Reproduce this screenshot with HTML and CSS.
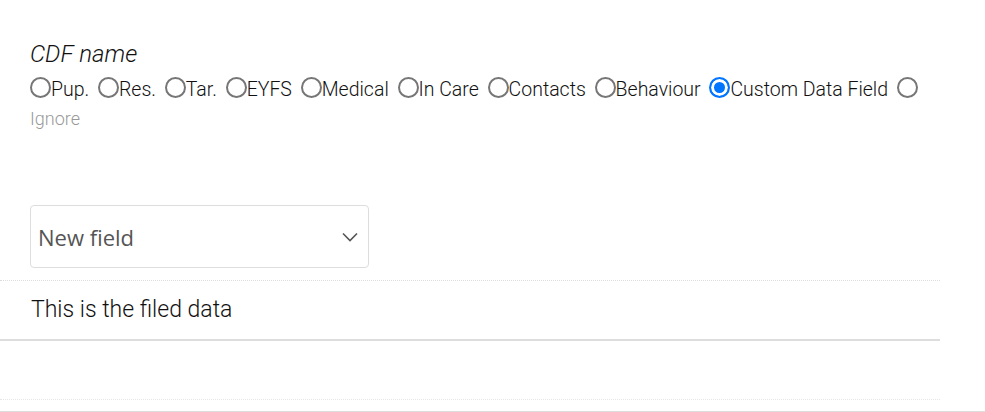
FILE: index.html
```html
<!DOCTYPE html>
<html>
<head>
    <meta name="viewport" content="width=device-width, initial-scale=1.0">
    <link rel="stylesheet" href="styles.css">
</head>
<body>

<div class="page">
    <div class="field-type">
        <div class="field-name">CDF name</div>
        <div class="type-options">
            <label class="type-option"><input type="radio" name="type">Pup.</label>
            <label class="type-option"><input type="radio" name="type">Res.</label>
            <label class="type-option"><input type="radio" name="type">Tar.</label>
            <label class="type-option"><input type="radio" name="type">EYFS</label>
            <label class="type-option"><input type="radio" name="type">Medical</label>
            <label class="type-option"><input type="radio" name="type">In Care</label>
            <label class="type-option"><input type="radio" name="type">Contacts</label>
            <label class="type-option"><input type="radio" name="type">Behaviour</label>
            <label class="type-option"><input type="radio" name="type" checked>Custom Data Field</label>
            <label class="type-option"><input type="radio" name="type"><span class="muted">Ignore</span></label>
        </div>
    </div>

    <div class="select-row">
        <div class="select-wrap">
            <select class="field-select">
                <option>New field</option>
            </select>
            <svg class="chevron" width="16" height="10" viewBox="0 0 16 10">
                <path d="M1 1.5 L8 8.5 L15 1.5" fill="none" stroke="#555" stroke-width="1.6"/>
            </svg>
        </div>
    </div>

    <div class="data-row">This is the filed data</div>
    <div class="empty-row"></div>
</div>
<div class="page-end"></div>

</body>
</html>
```

FILE: styles.css
```css
body {
    font-family: Roboto, "Liberation Sans", sans-serif;
    font-weight: 300;
    margin: 0;
    padding: 0;
    background-color: #fff;
    color: #111;
}

.page {
    width: 940px;
}

.field-type {
    padding: 40px 0 0 30px;
    height: 163px;
    box-sizing: border-box;
}

.field-name {
    font-size: 24px;
    font-style: italic;
    line-height: 28px;
}

.type-options {
    margin-top: 7px;
    font-size: 19.5px;
    line-height: 30px;
}

.type-option {
    white-space: nowrap;
    margin-right: 4px;
}

.type-option input[type="radio"] {
    appearance: none;
    -webkit-appearance: none;
    box-sizing: border-box;
    width: 21px;
    height: 21px;
    margin: 0;
    border: 2px solid #767676;
    border-radius: 50%;
    background-color: #fff;
    vertical-align: -2px;
}

.type-option input[type="radio"]:checked {
    border-color: #0075ff;
    background-color: #0075ff;
    box-shadow: inset 0 0 0 3px #fff;
}

.muted {
    display: block;
    font-size: 18px;
    line-height: 28px;
    color: #999;
}

.select-row {
    padding: 42px 0 12px 30px;
    border-bottom: 1px dotted #ddd;
}

.select-wrap {
    position: relative;
    width: 339px;
}

.field-select {
    appearance: none;
    -webkit-appearance: none;
    width: 339px;
    height: 63px;
    padding: 0 7px;
    border: 1px solid #ddd;
    border-radius: 4px;
    background-color: #fff;
    font-family: "Open Sans", sans-serif;
    font-size: 22px;
    color: #555;
}

.chevron {
    position: absolute;
    right: 11px;
    top: 27px;
    pointer-events: none;
}

.data-row {
    height: 58px;
    line-height: 58px;
    padding-left: 31px;
    font-size: 23px;
    border-bottom: 2px solid #ddd;
}

.empty-row {
    height: 58px;
    border-bottom: 1px dotted #e6e6e6;
}

.page-end {
    margin-top: 11px;
    border-top: 2px solid #ddd;
}
```
